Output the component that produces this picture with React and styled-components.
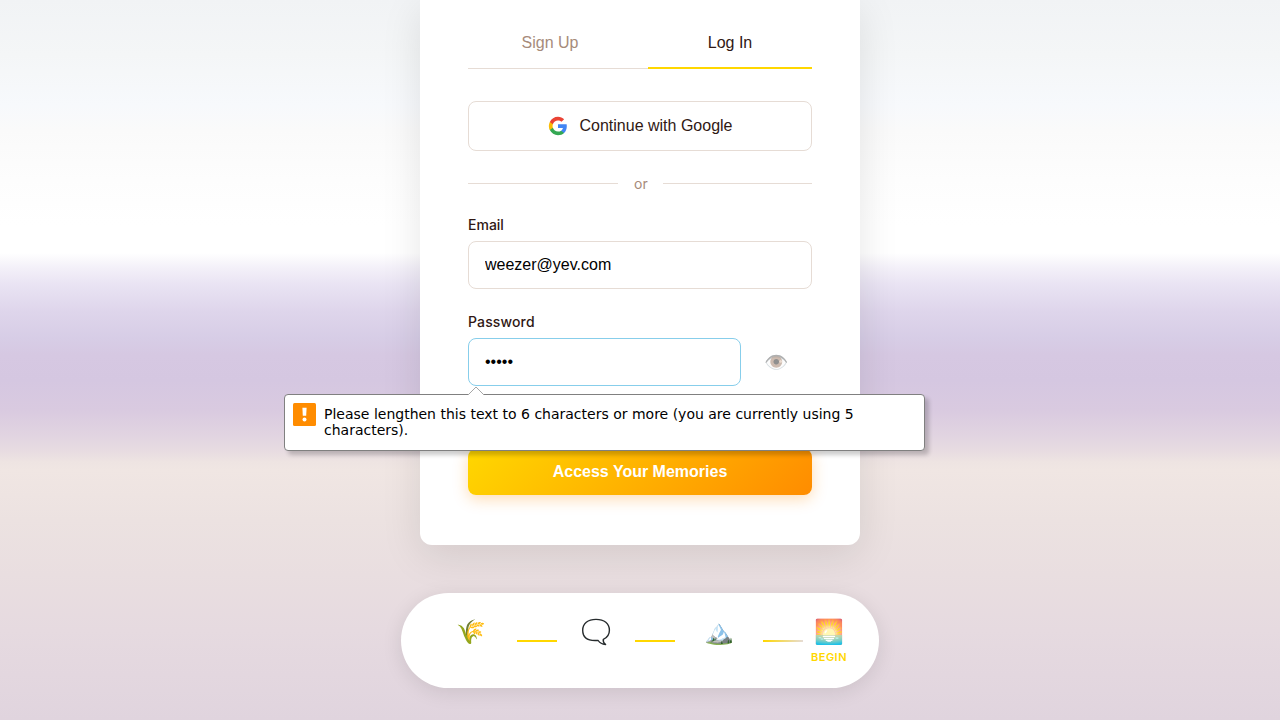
import React from "react";
import styled, { createGlobalStyle } from "styled-components";

const GlobalStyle = createGlobalStyle`
  *, *::before, *::after { box-sizing: border-box; }
  body { margin: 0; overflow: hidden; font-family: Inter, sans-serif; color: #301814; }
  button, input { font-family: "Liberation Sans", Arial, sans-serif; font-size: 16px; margin: 0; }
`;

const Page = styled.main`
  position: relative;
  height: 720px;
  display: flex;
  flex-direction: column;
  align-items: center;
  overflow: hidden;
  background: linear-gradient(
    180deg,
    #f1f3f5 0,
    #f4f6f7 55px,
    #f7f9fc 105px,
    #fafafa 130px,
    #fdfdfd 180px,
    #ffffff 225px,
    #ffffff 253px,
    #f4f1f9 267px,
    #e9e3f3 285px,
    #ded5eb 312px,
    #d7cde6 338px,
    #d6c8e2 355px,
    #d5c7e1 380px,
    #d9cae0 410px,
    #e2d5e1 438px,
    #e7dbe1 450px,
    #eee4e2 462px,
    #f0e6e3 470px,
    #ece2e1 520px,
    #e9dee0 575px,
    #e6dae0 630px,
    #e0d4de 720px
  );
`;

const Card = styled.section`
  width: 440px;
  height: 545px;
  flex: none;
  padding: 16px 48px 50px;
  background: #fff;
  border-radius: 0 0 12px 12px;
  box-shadow: 0 10px 40px rgba(0, 0, 0, 0.1);
`;

const Tabs = styled.div`
  display: flex;
  height: 53px;
  margin-bottom: 32px;
  border-bottom: 1px solid #e6dcd5;
`;

const Tab = styled.button`
  flex: 1;
  height: 53px;
  padding: 2px 0 0;
  border: 0;
  border-bottom: 2px solid ${(p) => (p.$active ? "#ffd700" : "transparent")};
  background: none;
  color: ${(p) => (p.$active ? "#301814" : "#a68b7a")};

  & + & { margin-left: 16px; }
`;

const GoogleButton = styled.button`
  width: 100%;
  height: 50px;
  display: flex;
  align-items: center;
  justify-content: center;
  gap: 12px;
  padding: 0;
  border: 1px solid #e6dcd5;
  border-radius: 8px;
  background: #fff;
  color: #301814;
`;

const Divider = styled.div`
  display: flex;
  align-items: center;
  height: 17px;
  margin: 24px 0;
  color: #a68b7a;
  font-size: 14px;
  line-height: 17px;

  &::before, &::after {
    content: "";
    flex: 1;
    height: 1px;
    background: #e6dcd5;
  }

  &::before { flex: none; width: 150px; }

  span { width: 45px; padding-left: 16px; }
`;

const Field = styled.div`
  margin-bottom: 24px;
`;

const Label = styled.label`
  display: block;
  height: 17px;
  margin-bottom: 8px;
  font-size: 14px;
  line-height: 17px;
  font-weight: 500;
  letter-spacing: ${(p) => p.$spacing || "normal"};
`;

const FieldRow = styled.div`
  display: flex;
`;

const Input = styled.input`
  width: ${(p) => p.$width || "100%"};
  height: 48px;
  padding: 0 16px;
  border: 1px solid ${(p) => (p.$focused ? "#87ceeb" : "#e6dcd5")};
  border-radius: 8px;
  outline: none;
  background: #fff;
  color: #000;
`;

const EyeButton = styled.button`
  flex: 1;
  padding: 0 1px 0 0;
  border: 0;
  background: none;
  color: #000;
  opacity: 0.5;
  font-size: 19.6px;
`;

const SubmitButton = styled.button`
  display: block;
  width: 100%;
  height: 46px;
  margin-top: 63px;
  padding: 0;
  border: 0;
  border-radius: 8px;
  background: linear-gradient(135deg, #ffd700, #ff8c00);
  box-shadow: 0 4px 15px rgba(255, 140, 0, 0.3);
  color: #fff;
  font-weight: 600;
`;

const Journey = styled.nav`
  display: flex;
  align-items: center;
  gap: 8px;
  height: 95px;
  flex: none;
  margin-top: 48px;
  padding: 0 32px;
  border-radius: 50px;
  background: #fff;
  box-shadow: 0 4px 20px rgba(0, 0, 0, 0.1);
`;

const Step = styled.div`
  width: ${(p) => p.$width}px;
  display: flex;
  flex-direction: column;
  align-items: center;
`;

const StepIcon = styled.span`
  height: 34px;
  font-size: 24px;
  line-height: 30px;
`;

const BubbleIcon = styled.svg`
  display: block;
  margin-top: 1px;
`;

const StepLabel = styled.span`
  height: 13px;
  color: #ffd700;
  font-size: 11px;
  line-height: 13px;
  font-weight: 600;
  letter-spacing: 0.5px;
  white-space: nowrap;
`;

const Connector = styled.span`
  width: 40px;
  height: 2px;
  margin-top: 1px;
  background: ${(p) => (p.$fade ? "linear-gradient(90deg, #ffd700, #e6dcd5)" : "#ffd700")};
`;

const Tooltip = styled.div`
  position: absolute;
  left: 284px;
  top: 394px;
  width: 641px;
  height: 57px;
  display: flex;
  gap: 8px;
  padding: 8px;
  border: 1px solid #808080;
  border-radius: 4px;
  background: #fff;
  box-shadow: 4px 4px 4px rgba(0, 0, 0, 0.2);
  color: #000;
  font: 14px/16px "DejaVu Sans", sans-serif;

  p { margin: 3px 0 0; width: 560px; }
  svg { flex: none; }
`;

const Arrow = styled.svg`
  position: absolute;
  left: 183px;
  top: -9px;
`;

function GoogleLogo() {
  return (
    <svg width="20" height="20" viewBox="0 0 24 24">
      <path fill="#4285F4" d="M22.56 12.25c0-.78-.07-1.53-.2-2.25H12v4.26h5.92c-.26 1.37-1.04 2.53-2.21 3.31v2.77h3.57c2.08-1.92 3.28-4.74 3.28-8.09z" />
      <path fill="#34A853" d="M12 23c2.97 0 5.46-.98 7.28-2.66l-3.57-2.77c-.98.66-2.23 1.06-3.71 1.06-2.86 0-5.29-1.93-6.16-4.53H2.18v2.84C3.99 20.53 7.7 23 12 23z" />
      <path fill="#FBBC05" d="M5.84 14.09c-.22-.66-.35-1.36-.35-2.09s.13-1.43.35-2.09V7.07H2.18C1.43 8.55 1 10.22 1 12s.43 3.45 1.18 4.93l2.85-2.22.81-.62z" />
      <path fill="#EA4335" d="M12 5.38c1.62 0 3.06.56 4.21 1.64l3.15-3.15C17.45 2.09 14.97 1 12 1 7.7 1 3.99 3.47 2.18 7.07l3.66 2.84c.87-2.6 3.3-4.53 6.16-4.53z" />
    </svg>
  );
}

function SpeechBubble() {
  return (
    <BubbleIcon width="30" height="28" viewBox="0 0 30 28">
      <path
        d="M15 1.4C6.8 1.4 1.7 5.5 1.7 12.2C1.7 18.8 6.2 22.5 14 22.5H17.2C18.5 24.6 20.9 26.2 24.6 26.5C22.7 25 21.9 23.2 22.3 21.3C26.3 19.6 28.4 16.6 28.4 12.2C28.4 5.5 23.3 1.4 15 1.4Z"
        fill="none"
        stroke="#262b2d"
        strokeWidth="1.4"
        strokeLinejoin="round"
      />
    </BubbleIcon>
  );
}

function ValidationMessage() {
  return (
    <Tooltip role="alert">
      <Arrow width="17" height="10" viewBox="0 0 17 10">
        <path d="M0 9 L8 1 L16 9 V10 H0Z" fill="#fff" />
        <path d="M0 9 L8 1 L16 9" fill="none" stroke="#a6a6a6" />
      </Arrow>
      <svg width="23" height="23" viewBox="0 0 23 23">
        <rect width="23" height="23" rx="1.5" fill="#ff8c00" />
        <path d="M9.4 4.8h4.2l-.4 8h-3.4z" fill="#fff" />
        <circle cx="11.5" cy="16.4" r="2" fill="#fff" />
      </svg>
      <p>Please lengthen this text to 6 characters or more (you are currently using 5 characters).</p>
    </Tooltip>
  );
}

export default function App() {
  return (
    <>
      <GlobalStyle />
      <Page>
        <Card>
          <Tabs>
            <Tab>Sign Up</Tab>
            <Tab $active>Log In</Tab>
          </Tabs>
          <GoogleButton>
            <GoogleLogo />
            Continue with Google
          </GoogleButton>
          <Divider><span>or</span></Divider>
          <Field>
            <Label>Email</Label>
            <Input type="email" defaultValue="weezer@yev.com" />
          </Field>
          <Field>
            <Label $spacing="0.14px">Password</Label>
            <FieldRow>
              <Input type="password" defaultValue="abcde" $width="273px" $focused />
              <EyeButton type="button">👁️</EyeButton>
            </FieldRow>
          </Field>
          <SubmitButton>Access Your Memories</SubmitButton>
        </Card>
        <Journey>
          <Step $width={76}><StepIcon>🌾</StepIcon><StepLabel /></Step>
          <Connector />
          <Step $width={62}><StepIcon><SpeechBubble /></StepIcon><StepLabel /></Step>
          <Connector />
          <Step $width={72}><StepIcon>🏔️</StepIcon><StepLabel /></Step>
          <Connector $fade />
          <Step $width={36}><StepIcon>🌅</StepIcon><StepLabel>BEGIN</StepLabel></Step>
        </Journey>
        <ValidationMessage />
      </Page>
    </>
  );
}
